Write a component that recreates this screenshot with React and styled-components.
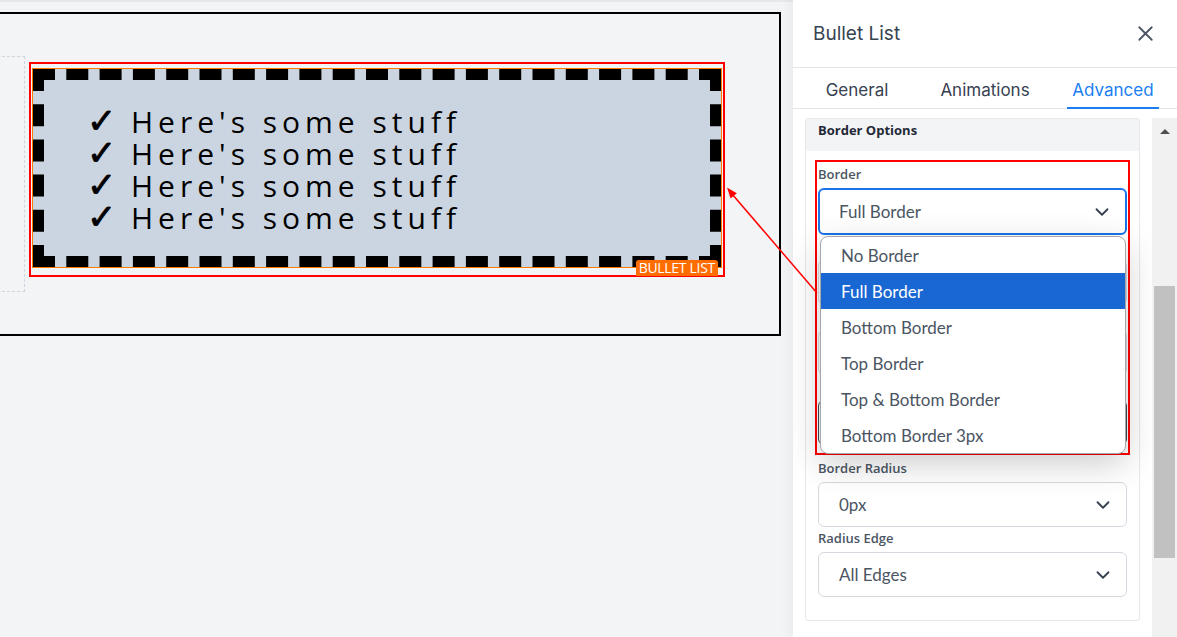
import React from "react";
import styled, { createGlobalStyle } from "styled-components";
import { X, ChevronDown } from "lucide-react";

const GlobalStyle = createGlobalStyle`
  html, body {
    margin: 0;
    padding: 0;
  }
  body {
    font-family: "Lato", "Noto Sans", sans-serif;
    background: #f3f4f6;
    overflow: hidden;
  }
  * {
    box-sizing: border-box;
  }
`;

const Shell = styled.div`
  position: relative;
  display: flex;
  width: 1177px;
  height: 637px;
  overflow: hidden;
`;

/* ---------- editor canvas ---------- */

const Canvas = styled.main`
  flex: none;
  width: 793px;
  background: #f3f4f6;
  border-top: 2px solid #e5e7eb;
  padding: 10px 12px 0 0;
  overflow: hidden;
`;

const Section = styled.div`
  margin-left: -60px;
  border: 2px solid #000;
  padding: 42px 0;
  display: flex;
  align-items: flex-start;
  gap: 4px;
`;

const Placeholder = styled.div`
  flex: none;
  width: 83px;
  height: 236px;
  border: 1px dashed #cfd5df;
`;

const SelectedFrame = styled.div`
  margin-top: 6px;
  border: 2px solid #ff0000;
  padding: 5px 2px 8px 2px;
  width: 696px;
`;

const Widget = styled.div`
  position: relative;
`;

const ListBox = styled.ul`
  margin: 0;
  list-style: none;
  height: 198px;
  border: 11px dashed #000;
  outline: 1px solid #ff7a00;
  background: #cbd5e1;
  padding: 25px 0 23px 43px;
  font-family: "Open Sans", "DejaVu Sans", sans-serif;
  font-size: 30px;
  line-height: 32px;
  letter-spacing: 5px;
  color: #000;
`;

const ListItem = styled.li`
  white-space: nowrap;
  height: 32px;
`;

const Check = styled.span`
  display: inline-block;
  width: 44px;
  font-family: "DejaVu Sans", sans-serif;
  font-size: 35px;
  line-height: 32px;
  letter-spacing: 0;
  -webkit-text-stroke: 0.9px #000;
`;

const WidgetBadge = styled.span`
  position: absolute;
  right: 3px;
  bottom: -9px;
  background: #ff6d00;
  color: #fff;
  font-family: "Open Sans", sans-serif;
  font-size: 14px;
  letter-spacing: -0.3px;
  line-height: 16px;
  padding: 0 3px;
  border-radius: 3px 3px 0 0;
`;

/* ---------- settings panel ---------- */

const Panel = styled.aside`
  position: relative;
  z-index: 1;
  flex: 1;
  display: flex;
  flex-direction: column;
  background: #fff;
  box-shadow: -5px 0 10px rgba(0, 0, 0, 0.04);
`;

const PanelHeader = styled.header`
  height: 68px;
  flex: none;
  display: flex;
  align-items: center;
  justify-content: space-between;
  padding: 0 19px 0 20px;
  border-bottom: 1px solid #e2e5e9;
`;

const PanelTitle = styled.h2`
  margin: 0;
  font-family: "Inter", sans-serif;
  font-weight: 400;
  font-size: 19px;
  color: #364452;
`;

const CloseButton = styled.button`
  border: 0;
  background: none;
  padding: 0;
  display: flex;
  color: #4b5563;
  cursor: pointer;
`;

const TabBar = styled.nav`
  height: 41px;
  flex: none;
  display: flex;
  border-bottom: 1px solid #e2e5e9;
`;

const Tab = styled.div`
  flex: 1;
  display: flex;
  justify-content: center;
`;

const TabLabel = styled.span`
  display: flex;
  align-items: center;
  height: calc(100% + 1px);
  margin-bottom: -1px;
  padding: 4px 5px 0;
  font-family: "Inter", sans-serif;
  font-size: 17px;
  color: ${(p) => (p.$active ? "#1a7ef2" : "#374151")};
  border-bottom: 2px solid ${(p) => (p.$active ? "#1a7ef2" : "transparent")};
`;

const PanelBody = styled.div`
  flex: 1;
  min-height: 0;
  display: flex;
  padding-top: 9px;
`;

const ScrollArea = styled.div`
  flex: 1;
  padding: 0 12px;
  overflow: hidden;
`;

const Scrollbar = styled.div`
  flex: none;
  width: 25px;
  background: #f1f1f1;
  display: flex;
  flex-direction: column;
`;

const ScrollArrow = styled.div`
  height: 26px;
  display: flex;
  align-items: center;
  justify-content: center;

  &::before {
    content: "";
    border-left: 5px solid transparent;
    border-right: 5px solid transparent;
    border-bottom: 5px solid #505050;
  }
`;

const ScrollThumb = styled.div`
  margin: 142px 2px 0;
  height: 272px;
  background: #c1c1c1;
`;

const Card = styled.section`
  border: 1px solid #e5e7eb;
  border-radius: 3px;
  background: #fff;
`;

const CardHeader = styled.h3`
  margin: 0;
  height: 32px;
  padding: 1px 12px 0;
  background: #f3f4f6;
  font-family: "Open Sans", sans-serif;
  font-weight: 700;
  font-size: 13px;
  line-height: 20px;
  color: #1f2937;
`;

const CardBody = styled.div`
  display: flex;
  flex-direction: column;
  gap: 2px;
  padding: 12px 12px 23px;
`;

const HighlightGroup = styled.div`
  position: relative;
  display: flex;
  flex-direction: column;
  gap: 2px;
  padding: 2px 0 7px;
  margin-bottom: 5px;
  outline: 2px solid #ff0000;
  outline-offset: 1px;
`;

const Field = styled.div`
  display: flex;
  flex-direction: column;
`;

const Label = styled.label`
  height: 18px;
  font-family: "Open Sans", sans-serif;
  font-weight: 600;
  font-size: 13px;
  line-height: 18px;
  color: #4b5563;
  margin-bottom: 5px;
`;

const SelectWrap = styled.div`
  position: relative;
`;

const SelectBox = styled.div`
  height: ${(p) => (p.$focused ? "47px" : "45px")};
  display: flex;
  align-items: center;
  justify-content: space-between;
  padding: 0 12px 0 ${(p) => (p.$focused ? "19px" : "20px")};
  border: ${(p) =>
    p.$focused ? "2px solid #1a73e8" : `1px solid ${p.$dark ? "#3f4650" : "#d5d9df"}`};
  border-radius: 6px;
  background: #fff;
  font-size: 17px;
  color: #4b5563;
`;

const Dropdown = styled.ul`
  position: absolute;
  z-index: 2;
  top: calc(100% + 1px);
  left: 2px;
  right: 1px;
  margin: 0;
  padding: 0;
  list-style: none;
  background: #fff;
  border: 1px solid #a4a8ad;
  border-radius: 8px;
  overflow: hidden;
  box-shadow: 0 10px 34px rgba(0, 0, 0, 0.2);
`;

const Option = styled.li`
  height: 36px;
  display: flex;
  align-items: center;
  padding-left: 20px;
  font-size: 17px;
  color: ${(p) => (p.$selected ? "#fff" : "#4b5563")};
  background: ${(p) => (p.$selected ? "#1967d2" : "transparent")};
`;

const Annotation = styled.svg`
  position: absolute;
  inset: 0;
  z-index: 5;
  pointer-events: none;
`;

const borderOptions = [
  "No Border",
  "Full Border",
  "Bottom Border",
  "Top Border",
  "Top & Bottom Border",
  "Bottom Border 3px",
];

const Select = ({ value, focused, dark }) => (
  <SelectBox $focused={focused} $dark={dark}>
    <span>{value}</span>
    <ChevronDown size={22} strokeWidth={2} color="#374151" />
  </SelectBox>
);

const App = () => {
  const items = Array.from({ length: 4 }, () => "Here's some stuff");

  return (
    <Shell>
      <GlobalStyle />
      <Canvas>
        <Section>
          <Placeholder />
          <SelectedFrame>
            <Widget>
              <ListBox>
                {items.map((text, i) => (
                  <ListItem key={i}>
                    <Check>✓</Check>
                    {text}
                  </ListItem>
                ))}
              </ListBox>
              <WidgetBadge>BULLET LIST</WidgetBadge>
            </Widget>
          </SelectedFrame>
        </Section>
      </Canvas>

      <Panel>
        <PanelHeader>
          <PanelTitle>Bullet List</PanelTitle>
          <CloseButton aria-label="Close">
            <X size={25} strokeWidth={1.7} />
          </CloseButton>
        </PanelHeader>

        <TabBar>
          <Tab>
            <TabLabel>General</TabLabel>
          </Tab>
          <Tab>
            <TabLabel>Animations</TabLabel>
          </Tab>
          <Tab>
            <TabLabel $active>Advanced</TabLabel>
          </Tab>
        </TabBar>

        <PanelBody>
          <ScrollArea>
            <Card>
              <CardHeader>Border Options</CardHeader>
              <CardBody>
                <HighlightGroup>
                  <Field>
                    <Label>Border</Label>
                    <SelectWrap>
                      <Select value="Full Border" focused />
                      <Dropdown>
                        {borderOptions.map((opt) => (
                          <Option key={opt} $selected={opt === "Full Border"}>
                            {opt}
                          </Option>
                        ))}
                      </Dropdown>
                    </SelectWrap>
                  </Field>
                  {/* fields covered by the open menu */}
                  <Field>
                    <Label />
                    <Select />
                  </Field>
                  <Field>
                    <Label />
                    <Select />
                  </Field>
                  <Field>
                    <Label />
                    <Select dark />
                  </Field>
                </HighlightGroup>

                <Field>
                  <Label>Border Radius</Label>
                  <Select value="0px" />
                </Field>
                <Field>
                  <Label>Radius Edge</Label>
                  <Select value="All Edges" />
                </Field>
              </CardBody>
            </Card>
          </ScrollArea>
          <Scrollbar>
            <ScrollArrow />
            <ScrollThumb />
          </Scrollbar>
        </PanelBody>
      </Panel>

      <Annotation width="1177" height="637" viewBox="0 0 1177 637">
        <line x1="817" y1="293" x2="732" y2="194" stroke="#ff0000" strokeWidth="1.5" />
        <polygon points="727,187.5 736.8,193.2 730.6,198.4" fill="#ff0000" />
      </Annotation>
    </Shell>
  );
};

export default App;
